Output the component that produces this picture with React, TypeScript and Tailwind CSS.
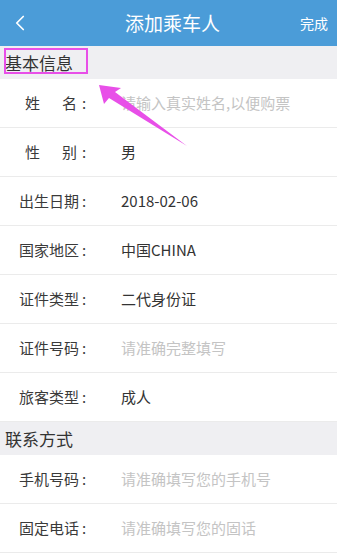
import { ChevronLeft } from "lucide-react";

interface Field {
  label: string;
  value: string;
  placeholder?: boolean;
}

const basicFields: Field[] = [
  { label: "姓名", value: "请输入真实姓名,以便购票", placeholder: true },
  { label: "性别", value: "男" },
  { label: "出生日期", value: "2018-02-06" },
  { label: "国家地区", value: "中国CHINA" },
  { label: "证件类型", value: "二代身份证" },
  { label: "证件号码", value: "请准确完整填写", placeholder: true },
  { label: "旅客类型", value: "成人" },
];

const contactFields: Field[] = [
  { label: "手机号码", value: "请准确填写您的手机号", placeholder: true },
  { label: "固定电话", value: "请准确填写您的固话", placeholder: true },
];

function SectionTitle({ title }: { title: string }) {
  return (
    <div className="h-[33px] bg-[#efeff2] flex items-center pl-[5px] text-[17px] text-[#333]">
      {title}
    </div>
  );
}

function Row({ label, value, placeholder }: Field) {
  const short = label.length === 2;
  return (
    <div className="h-[49px] flex items-center border-b border-[#ebebeb] bg-white">
      <div className="w-[118px] pl-[19px] flex items-center text-[15px] text-[#3a3a3a]">
        {short ? (
          <span className="w-[61px] pl-[6px] pr-[3px] flex justify-between">
            <span>{label[0]}</span>
            <span>{label[1]}</span>
          </span>
        ) : (
          <span className="w-[61px]">{label}</span>
        )}
        <span className="ml-[2px]">:</span>
      </div>
      <div
        className={`pl-[3px] text-[15px] ${placeholder ? "text-[#c4c4c4]" : "text-[#333]"}`}
      >
        {value}
      </div>
    </div>
  );
}

export default function App() {
  return (
    <div
      className="relative w-[337px] h-[554px] overflow-hidden bg-white"
      style={{ fontFamily: '"Noto Sans CJK SC", Roboto, sans-serif' }}
    >
      <header className="h-[46px] bg-[#4b9cd8] flex items-center justify-between text-white">
        <ChevronLeft className="w-[26px] h-[26px] ml-[7px]" strokeWidth={1.6} />
        <span className="text-[19px] ml-[12px]">添加乘车人</span>
        <span className="text-[14px] mr-[9px]">完成</span>
      </header>

      <SectionTitle title="基本信息" />
      {basicFields.map((f) => (
        <Row key={f.label} {...f} />
      ))}

      <SectionTitle title="联系方式" />
      {contactFields.map((f) => (
        <Row key={f.label} {...f} />
      ))}

      {/* annotation overlay */}
      <div className="absolute left-[4px] top-[48px] w-[84px] h-[26px] border-2 border-[#e84fe8]" />
      <svg
        className="absolute left-0 top-0 pointer-events-none"
        width="337"
        height="554"
        viewBox="0 0 337 554"
      >
        <polygon points="99,85 121,88 115,92 187,146 109,98 104,104" fill="#e84fe8" />
      </svg>
    </div>
  );
}
